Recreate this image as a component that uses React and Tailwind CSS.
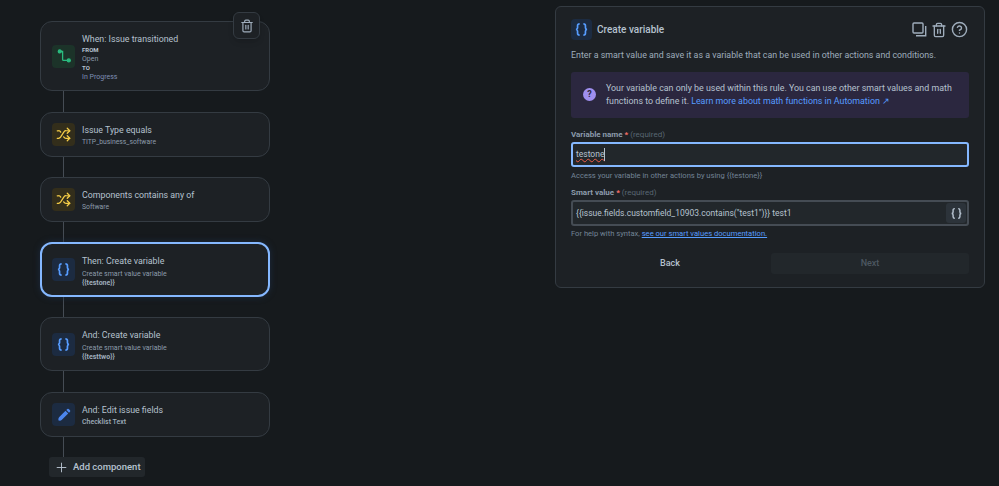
import React from "react";
import { Trash2, Shuffle, Plus, CircleHelp } from "lucide-react";

const font = { fontFamily: 'Roboto, "Noto Sans", sans-serif' };

function Braces({ size = 15, color = "#579dff" }) {
  return (
    <svg width={size} height={size} viewBox="0 0 16 16" fill="none" stroke={color} strokeWidth="1.8">
      <path d="M6 2c-1.6 0-2.2.6-2.2 1.900v2.300c0 1-.6 1.600-1.600 1.800 1 .2 1.600.8 1.600 1.800v2.300c0 1.300.6 1.900 2.200 1.900" />
      <path d="M10 2c1.600 0 2.200.6 2.200 1.900v2.300c0 1 .6 1.600 1.600 1.800-1 .2-1.600.8-1.600 1.800v2.300c0 1.300-.6 1.900-2.200 1.900" />
    </svg>
  );
}

function IconBox({ tone, children }) {
  return (
    <div className={`w-[23px] h-[23px] shrink-0 rounded-[4px] flex items-center justify-center ${tone}`}>
      {children}
    </div>
  );
}

function Connector({ h = "h-5" }) {
  return <div className={`w-px ml-[23px] bg-[#454c54] ${h}`} />;
}

function Card({ icon, title, active, className = "", children }) {
  return (
    <div
      className={`relative w-[230px] rounded-[12px] flex items-center pr-2 bg-[#1d2125] ${
        active
          ? "border-2 border-[#85b8ff] pl-[10px] shadow-[0_0_6px_#1c2b41]"
          : "border border-[#343b42] pl-[11px]"
      } ${className}`}
    >
      {icon}
      <div className="ml-[7px] pt-[2px] min-w-0 whitespace-nowrap">
        <div className="text-[8.8px] leading-[14px] text-[#b6c2cf]">{title}</div>
        {children}
      </div>
    </div>
  );
}

const yellowIcon = (
  <IconBox tone="bg-[#332e1b]">
    <Shuffle size={15} className="text-[#f5cd47]" />
  </IconBox>
);

const varIcon = (
  <IconBox tone="bg-[#1c2b41]">
    <Braces />
  </IconBox>
);

function Flow() {
  return (
    <div className="w-[230px] ml-10 mt-[21px] shrink-0" style={font}>
      <Card
        title="When: Issue transitioned"
        className="h-[70px]"
        icon={
          <IconBox tone="bg-[#1c3329]">
            <svg width="16" height="16" viewBox="0 0 16 16" fill="none" stroke="#2abb7f" strokeWidth="1.3">
              <circle cx="3.8" cy="3.4" r="1.5" fill="#2abb7f" />
              <circle cx="12.8" cy="12.4" r="1.5" fill="#2abb7f" />
              <path d="M5 3.4h1.600v8a1 1 0 0 0 1 1H11" />
            </svg>
          </IconBox>
        }
      >
        <div className="text-[6px] leading-[8px] font-bold text-[#b6c2cf]">FROM</div>
        <div className="text-[7px] leading-[10px] text-[#8c9bab]">Open</div>
        <div className="text-[6px] leading-[7px] font-bold text-[#b6c2cf]">TO</div>
        <div className="text-[7px] leading-[12px] text-[#7d8fb5]">In Progress</div>
        <button className="absolute -top-[10px] right-[9px] w-[27px] h-[27px] rounded-[6px] bg-[#1d2125] border border-[#343b42] shadow-md flex items-center justify-center">
          <Trash2 size={14} className="text-[#9fadbc]" />
        </button>
      </Card>
      <Connector h="h-[21px]" />
      <Card title="Issue Type equals" className="h-[45px]" icon={yellowIcon}>
        <div className="text-[6.8px] leading-[11px] text-[#8c9bab]">TITP_business_software</div>
      </Card>
      <Connector />
      <Card title="Components contains any of" className="h-[45px]" icon={yellowIcon}>
        <div className="text-[6.8px] leading-[11px] text-[#8c9bab]">Software</div>
      </Card>
      <Connector />
      <Card title="Then: Create variable" active className="h-[55px]" icon={varIcon}>
        <div className="text-[7px] leading-[10px] mt-[1px] text-[#8c9bab]">Create smart value variable</div>
        <div className="text-[7px] leading-[9px] font-bold text-[#9fadbc]">{"{{testone}}"}</div>
      </Card>
      <Connector />
      <Card title="And: Create variable" className="h-[54px]" icon={varIcon}>
        <div className="text-[7px] leading-[10px] mt-[1px] text-[#8c9bab]">Create smart value variable</div>
        <div className="text-[7px] leading-[9px] font-bold text-[#9fadbc]">{"{{testtwo}}"}</div>
      </Card>
      <Connector h="h-[21px]" />
      <Card
        title="And: Edit issue fields"
        className="h-[45px]"
        icon={
          <IconBox tone="bg-[#1c2b41]">
            <svg width="14" height="14" viewBox="0 0 14 14" fill="#4c86ee">
              <path d="M1.500 12.500c-.3-1.500 0-2.600.8-3.400L8.500 2.800l2.700 2.700-6.300 6.300c-.8.8-1.900 1-3.400.7z" />
              <path d="M9.300 2 10.300 1a1 1 0 0 1 1.400 0l1.300 1.300a1 1 0 0 1 0 1.400L12 4.700z" />
            </svg>
          </IconBox>
        }
      >
        <div className="text-[7px] leading-[11px] font-medium text-[#9fadbc]">Checklist Text</div>
      </Card>
      <Connector />
      <button className="ml-[9px] w-[96px] h-5 rounded-[3px] bg-[#22272b] flex items-center pl-[5px] gap-[4px] whitespace-nowrap text-[9.5px] font-medium text-[#b6c2cf]">
        <Plus size={15} strokeWidth={1.5} />
        Add component
      </button>
    </div>
  );
}

function Label({ children }) {
  return (
    <div className="text-[8px] leading-[11px] font-bold text-[#8c9bab]">
      {children}
      <span className="text-[#f87168]"> *</span>{" "}
      <span className="font-normal text-[#596773]">(required)</span>
    </div>
  );
}

function Panel() {
  return (
    <div
      className="w-[430px] h-[282px] ml-[285px] mt-[6px] shrink-0 rounded-[6px] border border-[#343b42] bg-[#1d2125] px-[15px] pt-3"
      style={font}
    >
      <div className="flex items-center h-[21px]">
        <IconBox tone="bg-[#1c2b41] !w-[21px] !h-[21px]">
          <Braces />
        </IconBox>
        <div className="ml-[5px] text-[10px] font-medium text-[#b6c2cf]">Create variable</div>
        <div className="ml-auto flex items-center gap-[4px] mr-[1px]">
          <svg width="15" height="15" viewBox="0 0 15 15" fill="none" stroke="#9fadbc" strokeWidth="1.4">
            <rect x="1" y="1" width="10" height="10" rx="1" />
            <path d="M13.700 4v9.700H4" />
          </svg>
          <Trash2 size={16} className="text-[#9fadbc]" />
          <CircleHelp size={17} className="text-[#9fadbc]" />
        </div>
      </div>
      <p className="mt-[9px] text-[8.85px] leading-[13px] whitespace-nowrap text-[#9fadbc]">
        Enter a smart value and save it as a variable that can be used in other actions and conditions.
      </p>
      <div className="mt-[10px] h-[46px] pb-[1px] rounded-[3px] bg-[#2b273f] flex items-center pl-3">
        <div className="w-[13px] h-[13px] rounded-full bg-[#9f8fef] shrink-0 flex items-center justify-center text-[9px] font-bold text-[#2b273f]">
          ?
        </div>
        <p className="ml-[10px] text-[8.85px] leading-[13px] whitespace-nowrap text-[#b6c2cf]">
          Your variable can only be used within this rule. You can use other smart values and math
          <br />
          functions to define it.{" "}
          <span className="text-[#579dff]">Learn more about math functions in Automation ↗</span>
        </p>
      </div>
      <div className="mt-[11px]">
        <Label>Variable name</Label>
      </div>
      <div className="mt-[2px] h-[25px] rounded-[3px] border-2 border-[#85b8ff] bg-[#22272b] flex items-center pl-[3px] text-[8.5px] text-[#b6c2cf]">
        <span className="underline decoration-wavy decoration-[#ef5c48] decoration-1">testone</span>
        <span className="w-px h-[13px] bg-[#b6c2cf]" />
      </div>
      <div className="mt-[3px] text-[7.6px] leading-[11px] text-[#738496]">
        {"Access your variable in other actions by using {{testone}}"}
      </div>
      <div className="mt-[6px]">
        <Label>Smart value</Label>
      </div>
      <div className="mt-[2px] h-[26px] rounded-[3px] border-2 border-[#454c54] bg-[#22272b] flex items-center pl-[3px] text-[8.5px] text-[#b6c2cf]">
        {'{{issue.fields.customfield_10903.contains("test1")}} test1'}
        <div className="ml-auto mr-[1px] w-5 h-5 rounded-[3px] bg-[#2c333a] flex items-center justify-center">
          <Braces size={13} color="#b6c2cf" />
        </div>
      </div>
      <div className="mt-[2px] text-[7.6px] leading-[11px] text-[#738496]">
        For help with syntax, <span className="text-[#579dff] underline">see our smart values documentation.</span>
      </div>
      <div className="mt-[14px] flex gap-[2px]">
        <button className="flex-1 h-[21px] text-[9px] font-medium text-[#b6c2cf]">Back</button>
        <button className="flex-1 h-[21px] rounded-[3px] bg-[#22272b] text-[9px] font-medium text-[#4d5761]">Next</button>
      </div>
    </div>
  );
}

export default function App() {
  return (
    <div className="w-[999px] h-[486px] overflow-hidden bg-[#161a1d] flex items-start">
      <Flow />
      <Panel />
    </div>
  );
}
